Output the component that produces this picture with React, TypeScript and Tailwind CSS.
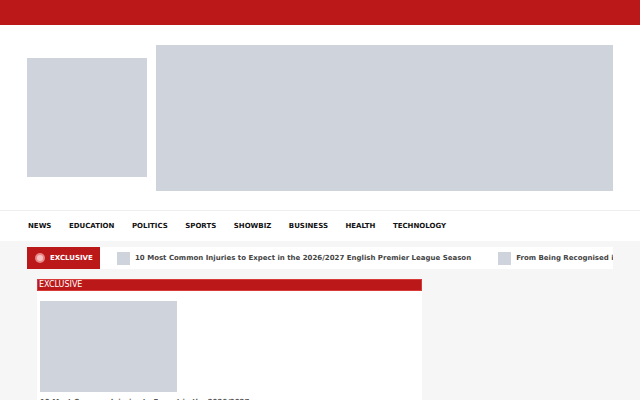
import React from "react";

const NAV_ITEMS = ["News", "Education", "Politics", "Sports", "Showbiz", "Business", "Health", "Technology"];

const TICKER = [
  "10 Most Common Injuries to Expect in the 2026/2027 English Premier League Season",
  "From Being Recognised in Nigeria to Global Stardom",
];

function Placeholder({ className }: { className: string }) {
  return <div className={`bg-[#cfd4dc] ${className}`} />;
}

export default function App() {
  return (
    <div className="min-h-[400px] overflow-hidden bg-[#f6f6f6] font-['DejaVu_Sans',sans-serif]">
      <div className="h-[25px] bg-[#bb1919]" />

      <header className="flex h-[185px] items-center gap-[9px] bg-white px-[27px]">
        <Placeholder className="h-[119px] w-[120px] shrink-0" />
        <Placeholder className="h-[146px] flex-1" />
      </header>

      <nav className="flex h-[31px] items-center gap-[17.5px] border-t border-[#eeeeee] bg-white px-[28px]">
        {NAV_ITEMS.map((item) => (
          <a key={item} className="text-[7px] font-bold uppercase text-[#111111]">
            {item}
          </a>
        ))}
      </nav>

      <div className="mx-[27px] mt-[6px] flex h-[22px] items-stretch">
        <div className="flex w-[73px] shrink-0 items-center gap-[5px] bg-[#bb1919] pl-[8px]">
          <span className="flex h-[10px] w-[10px] items-center justify-center rounded-full bg-[#e98585]">
            <span className="h-[6px] w-[6px] rounded-full bg-[#f4c2c2]" />
          </span>
          <span className="text-[7px] font-bold text-white">EXCLUSIVE</span>
        </div>
        <div className="flex flex-1 items-center gap-[27px] overflow-hidden whitespace-nowrap bg-white pl-[17px]">
          {TICKER.map((title) => (
            <div key={title} className="flex shrink-0 items-center gap-[5px]">
              <Placeholder className="h-[13px] w-[13px]" />
              <span className="text-[7px] font-bold text-[#444444]">{title}</span>
            </div>
          ))}
        </div>
      </div>

      <section className="ml-[37px] mt-[10px] w-[385px] bg-white">
        <h2 className="h-[12px] border border-[#d83a3a] bg-[#bb1919] pl-[1px] text-[8px] leading-[10px] text-white">
          EXCLUSIVE
        </h2>
        <div className="px-[3px] pt-[10px]">
          <Placeholder className="h-[91px] w-[137px]" />
          <p className="mt-[5px] text-[7px] font-bold text-[#555555]">
            10 Most Common Injuries to Expect in the 2026/2027
          </p>
        </div>
      </section>
    </div>
  );
}
